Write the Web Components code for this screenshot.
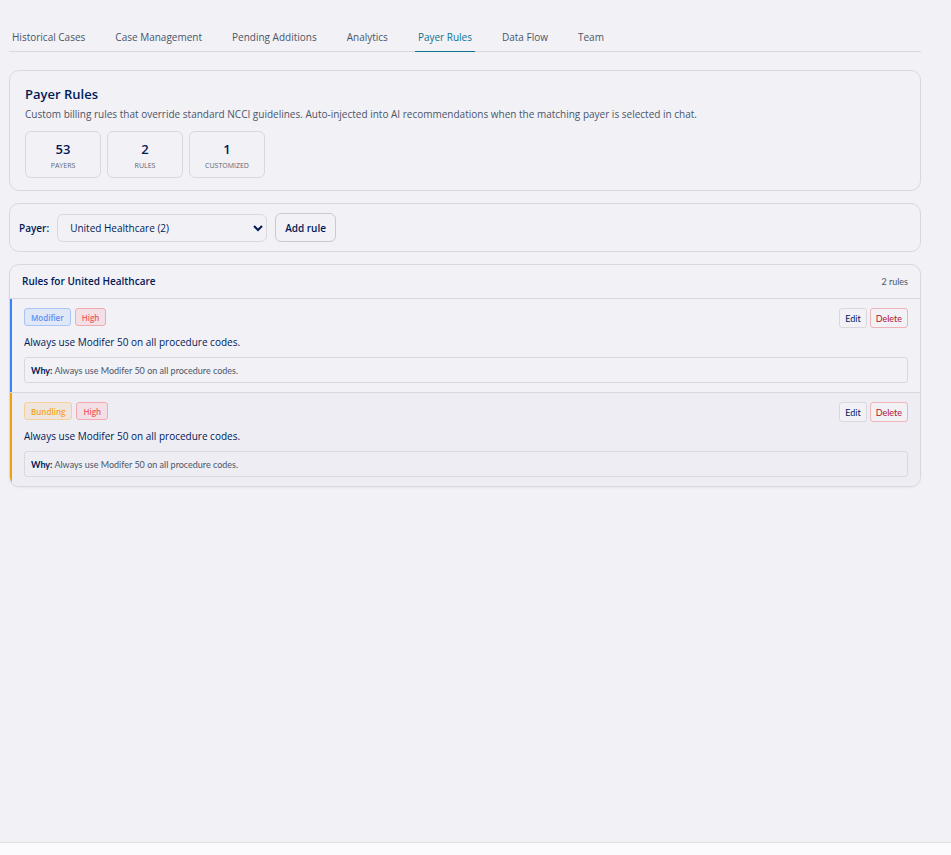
<!DOCTYPE html>
<html lang="en">
<head>
<meta charset="utf-8">
<meta name="viewport" content="width=device-width, initial-scale=1">
<title>Payer Rules</title>
<style>
  :root {
    --bg: #f2f1f6;
    --line: #d8d8de;
    --navy: #001a57;
    --muted: #4a5568;
    --teal: #0e7490;
    --small: 9px Lato, "Open Sans", sans-serif;
  }

  body {
    margin: 0;
    background: var(--bg);
    color: var(--navy);
    font-family: "Open Sans", "Noto Sans", sans-serif;
    font-size: 10px;
  }
</style>
</head>
<body>
<app-page>
  <app-tabs slot="nav" active="Payer Rules"
    tabs="Historical Cases,Case Management,Pending Additions,Analytics,Payer Rules,Data Flow,Team"></app-tabs>

  <payer-summary>
    <span slot="title">Payer Rules</span>
    <span slot="text">Custom billing rules that override standard NCCI guidelines. Auto-injected into AI recommendations when the matching payer is selected in chat.</span>
    <stat-box value="53" label="Payers"></stat-box>
    <stat-box value="2" label="Rules"></stat-box>
    <stat-box value="1" label="Customized"></stat-box>
  </payer-summary>

  <payer-picker></payer-picker>

  <rule-list>
    <span slot="title">Rules for United Healthcare</span>
    <span slot="count">2 rules</span>
    <rule-item kind="Modifier" severity="High">
      Always use Modifer 50 on all procedure codes.
      <span slot="why">Always use Modifer 50 on all procedure codes.</span>
    </rule-item>
    <rule-item kind="Bundling" severity="High">
      Always use Modifer 50 on all procedure codes.
      <span slot="why">Always use Modifer 50 on all procedure codes.</span>
    </rule-item>
  </rule-list>
</app-page>

<script>
function render(el, html) {
  const template = document.createElement('template');
  template.innerHTML = html;
  el.attachShadow({ mode: "open" });
  el.shadowRoot.appendChild(template.content.cloneNode(true));
}

class AppPage extends HTMLElement {
  connectedCallback() {
    if (this.shadowRoot) return;
    render(this, `
      <style>
        :host {
          display: flex;
          flex-direction: column;
          min-height: 100vh;
        }
        .content {
          flex: 1;
          padding: 24px 30px 24px 9px;
        }
        main {
          display: flex;
          flex-direction: column;
          gap: 12px;
          margin-top: 18px;
        }
        footer {
          height: 12px;
          border-top: 1px solid #dfdfe2;
          background: #fbfbfd;
        }
      </style>
      <div class="content">
        <slot name="nav"></slot>
        <main><slot></slot></main>
      </div>
      <footer></footer>
    `);
  }
}

class AppTabs extends HTMLElement {
  connectedCallback() {
    if (this.shadowRoot) return;
    const active = this.getAttribute("active");
    const links = this.getAttribute("tabs").split(",").map(tab =>
      `<a href="#"${tab === active ? ' class="active" aria-current="page"' : ""}>${tab}</a>`
    ).join("");

    render(this, `
      <style>
        :host { display: block; }
        nav {
          display: flex;
          gap: 24px;
          border-bottom: 1px solid var(--line);
        }
        a {
          padding: 4px 3px 5px;
          margin-bottom: -1px;
          border-bottom: 1px solid transparent;
          color: var(--muted);
          font-weight: 500;
          line-height: 18px;
          text-decoration: none;
          white-space: nowrap;
        }
        a.active {
          color: var(--teal);
          border-color: var(--teal);
        }
      </style>
      <nav>${links}</nav>
    `);
  }
}

class PayerSummary extends HTMLElement {
  connectedCallback() {
    if (this.shadowRoot) return;
    render(this, `
      <style>
        :host {
          display: block;
          padding: 12px 15px;
          border: 1px solid var(--line);
          border-radius: 10px;
        }
        h1 {
          margin: 0;
          font-size: 13px;
          font-weight: 600;
          line-height: 22px;
        }
        p {
          margin: 0 0 8px;
          color: var(--muted);
          line-height: 18px;
        }
        .stats {
          display: flex;
          flex-wrap: wrap;
          gap: 6px;
        }
      </style>
      <h1><slot name="title"></slot></h1>
      <p><slot name="text"></slot></p>
      <div class="stats"><slot></slot></div>
    `);
  }
}

class StatBox extends HTMLElement {
  connectedCallback() {
    if (this.shadowRoot) return;
    render(this, `
      <style>
        :host {
          display: block;
          box-sizing: border-box;
          min-width: 76px;
          padding: 8px 6px 4px;
          border: 1px solid var(--line);
          border-radius: 6px;
          text-align: center;
        }
        .value {
          font-size: 13px;
          font-weight: 600;
          line-height: 18px;
        }
        .label {
          color: #5b6577;
          font-size: 7px;
          line-height: 15px;
          text-transform: uppercase;
        }
      </style>
      <div class="value">${this.getAttribute("value")}</div>
      <div class="label">${this.getAttribute("label")}</div>
    `);
  }
}

class PayerPicker extends HTMLElement {
  connectedCallback() {
    if (this.shadowRoot) return;
    render(this, `
      <style>
        :host {
          display: flex;
          align-items: center;
          gap: 8px;
          padding: 9px;
          border: 1px solid var(--line);
          border-radius: 10px;
        }
        label { font-weight: 600; }
        select, button {
          box-sizing: border-box;
          margin: 0;
          border: 1px solid var(--line);
          border-radius: 6px;
          background: var(--bg);
          color: var(--navy);
          font: inherit;
        }
        select {
          width: 210px;
          height: 28px;
          padding: 0 0 0 8px;
        }
        button {
          height: 29px;
          padding: 0 9px;
          border-color: #c9c9d0;
          font-weight: 600;
        }
      </style>
      <label for="payer">Payer:</label>
      <select id="payer">
        <option>United Healthcare (2)</option>
      </select>
      <button type="button">Add rule</button>
    `);
  }
}

class RuleList extends HTMLElement {
  connectedCallback() {
    if (this.shadowRoot) return;
    render(this, `
      <style>
        :host {
          display: block;
          overflow: hidden;
          border: 1px solid var(--line);
          border-radius: 10px;
          box-shadow: 0 1px 2px rgba(0, 0, 0, .05);
        }
        header {
          display: flex;
          align-items: center;
          justify-content: space-between;
          padding: 0 12px;
          line-height: 33px;
        }
        h2 {
          margin: 0;
          font-size: 10px;
          font-weight: 600;
        }
        .count {
          color: var(--muted);
          font: var(--small);
        }
      </style>
      <header>
        <h2><slot name="title"></slot></h2>
        <span class="count"><slot name="count"></slot></span>
      </header>
      <slot></slot>
    `);
  }
}

class RuleItem extends HTMLElement {
  connectedCallback() {
    if (this.shadowRoot) return;
    const kind = this.getAttribute("kind");
    const severity = this.getAttribute("severity");

    render(this, `
      <style>
        :host {
          display: block;
          border-top: 1px solid var(--line);
        }
        :host(:nth-of-type(even)) { background: #eeedf3; }
        article {
          padding: 9px 12px;
          border-left: 2px solid #3b82f6;
        }
        article.bundling { border-left-color: #f59e0b; }
        .top {
          display: flex;
          align-items: flex-start;
          justify-content: space-between;
        }
        .badges, .actions {
          display: flex;
          gap: 4px;
        }
        .actions { gap: 3px; }
        .badge {
          padding: 1px 6px 0;
          border: 1px solid;
          border-radius: 3px;
          font-size: 8px;
          font-weight: 600;
          line-height: 15px;
        }
        .badge.modifier {
          color: #5b8ff5;
          border-color: #a9c5f8;
          background: #e0e7f6;
        }
        .badge.bundling {
          color: #f5a623;
          border-color: #f3d19b;
          background: #efe5dd;
        }
        .badge.high {
          color: #ee5a5f;
          border-color: #f2aab0;
          background: #f3e0e6;
        }
        button {
          box-sizing: border-box;
          height: 20px;
          padding: 0 5px;
          border: 1px solid var(--line);
          border-radius: 3px;
          background: var(--bg);
          color: var(--navy);
          font: var(--small);
        }
        .delete {
          color: #b3142b;
          border-color: #efb3b8;
        }
        p {
          margin: 5px 0;
          line-height: 19px;
        }
        .why {
          padding: 1px 6px 0;
          border: 1px solid var(--line);
          border-radius: 3px;
          color: var(--muted);
          font: var(--small);
          line-height: 23px;
        }
        b { color: var(--navy); }
      </style>
      <article class="${kind.toLowerCase()}">
        <div class="top">
          <div class="badges">
            <span class="badge ${kind.toLowerCase()}">${kind}</span>
            <span class="badge ${severity.toLowerCase()}">${severity}</span>
          </div>
          <div class="actions">
            <button type="button">Edit</button>
            <button type="button" class="delete">Delete</button>
          </div>
        </div>
        <p><slot></slot></p>
        <div class="why"><b>Why:</b> <slot name="why"></slot></div>
      </article>
    `);
  }
}

customElements.define('app-page', AppPage);
customElements.define('app-tabs', AppTabs);
customElements.define('payer-summary', PayerSummary);
customElements.define('stat-box', StatBox);
customElements.define('payer-picker', PayerPicker);
customElements.define('rule-list', RuleList);
customElements.define('rule-item', RuleItem);
</script>
</body>
</html>
